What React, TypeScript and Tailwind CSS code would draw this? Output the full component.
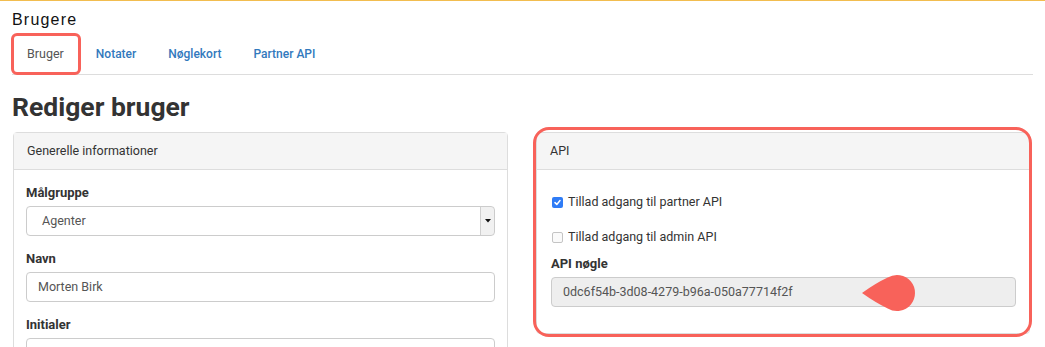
import React from "react";

const RED = "#f8625a";

function Checkbox({ checked }: { checked: boolean }) {
  return checked ? (
    <span className="inline-flex h-[11px] w-[11px] items-center justify-center rounded-[2px] bg-[#2f7cf6]">
      <svg width="9" height="9" viewBox="0 0 9 9">
        <path d="M2 4.6 L3.8 6.4 L7 2.6" fill="none" stroke="white" strokeWidth="1.5" strokeLinecap="round" strokeLinejoin="round" />
      </svg>
    </span>
  ) : (
    <span className="inline-block h-[11px] w-[11px] rounded-[2px] border border-[#c4c4c4] bg-[#fafafa]" />
  );
}

export default function App() {
  return (
    <div
      className="h-[347px] w-[1045px] overflow-hidden border-t border-[#f2bd4f] bg-white text-[12.5px] text-[#333]"
      style={{ fontFamily: "Roboto, 'Liberation Sans', Arial, sans-serif" }}
    >
      <div className="pl-[12px] pr-[12px]">
        <div
          className="pt-[8px] text-[16px] leading-[22px] tracking-[1.2px] text-[#111]"
          style={{ fontFamily: "'Liberation Sans', Arial, sans-serif" }}
        >
          Brugere
        </div>
        <div className="mt-[3px] flex border-b border-[#dddddd] text-[12px] font-medium">
          <div className="relative mr-[2px] px-[15px] py-[10px] text-[12.5px] font-normal leading-[20px] text-[#555]">
            Bruger
            <span className="absolute -left-[1px] -top-[1px] -bottom-[1px] right-[-2px] rounded-[6px] border-[3px] border-[#f8625a]" />
          </div>
          <div className="mr-[2px] px-[15px] py-[10px] leading-[20px] text-[#3279bd]">Notater</div>
          <div className="mr-[2px] px-[15px] py-[10px] leading-[20px] text-[#3279bd]">Nøglekort</div>
          <div className="mr-[2px] px-[15px] py-[10px] leading-[20px] text-[#3279bd]">Partner API</div>
        </div>
        <div className="mt-[16px] text-[26.5px] font-bold leading-[31px] text-[#333]">Rediger bruger</div>
      </div>

      <div className="mt-[10px] grid grid-cols-[495px_494px] gap-[28px] pl-[13px]">
        {/* Left panel */}
        <div className="rounded-[4px] border border-[#dddddd]">
          <div className="border-b border-[#dddddd] bg-[#f5f5f5] px-[13px] py-[10px] leading-[16px]">
            Generelle informationer
          </div>
          <div className="px-[12px] pt-[15px]">
            <div className="mb-[15px]">
              <div className="mb-[5px] text-[13px] font-bold leading-[16px] text-[#333]">Målgruppe</div>
              <div className="flex h-[30px] overflow-hidden rounded-[4px] border border-[#cccccc] bg-white">
                <div className="flex flex-1 items-center pl-[15px] text-[#555]">Agenter</div>
                <div className="flex w-[14px] items-center justify-center border-l border-[#cfcfcf] bg-[#f1f1f1] shadow-[1px_0_1px_rgba(0,0,0,0.25)]">
                  <svg width="6" height="4" viewBox="0 0 6 4">
                    <path d="M0 0 L6 0 L3 3.5 Z" fill="#111" />
                  </svg>
                </div>
              </div>
            </div>
            <div className="mb-[15px]">
              <div className="mb-[5px] text-[13px] font-bold leading-[16px] text-[#333]">Navn</div>
              <div className="flex h-[30px] items-center rounded-[4px] border border-[#cccccc] bg-white pl-[11px] text-[#555]">
                Morten Birk
              </div>
            </div>
            <div className="mb-[15px]">
              <div className="mb-[5px] text-[13px] font-bold leading-[16px] text-[#333]">Initialer</div>
              <div className="h-[30px] rounded-[4px] border border-[#cccccc] bg-white" />
            </div>
          </div>
        </div>

        {/* Right panel */}
        <div className="relative h-[202px]">
          <div className="h-full rounded-[4px] border border-[#dddddd]">
            <div className="border-b border-[#dddddd] bg-[#f5f5f5] px-[13px] py-[10px] leading-[16px]">API</div>
            <div className="pl-[14px] pr-[13px] pt-[22px]">
              <label className="flex h-[20px] items-center gap-[5px] pl-[1px]">
                <Checkbox checked />
                <span>Tillad adgang til partner API</span>
              </label>
              <label className="mt-[15px] flex h-[20px] items-center gap-[5px] pl-[1px]">
                <Checkbox checked={false} />
                <span>Tillad adgang til admin API</span>
              </label>
              <div className="mt-[9px] mb-[5px] text-[13px] font-bold leading-[16px] text-[#333]">API nøgle</div>
              <div className="relative flex h-[30px] items-center rounded-[4px] border border-[#cccccc] bg-[#eeeeee] pl-[11px] text-[#555]">
                0dc6f54b-3d08-4279-b96a-050a77714f2f
                <svg className="absolute left-[310px] top-[-4px]" width="54" height="38" viewBox="0 0 54 38">
                  <path d="M0 19 Q14 9 25.73 3.57 A18 18 0 1 1 25.73 34.43 Q14 29 0 19 Z" fill={RED} />
                </svg>
              </div>
            </div>
          </div>
          <span className="pointer-events-none absolute -left-[3px] -top-[5px] -right-[2px] -bottom-[3px] rounded-[16px] border-[3px] border-[#f8625a]" />
        </div>
      </div>
    </div>
  );
}
